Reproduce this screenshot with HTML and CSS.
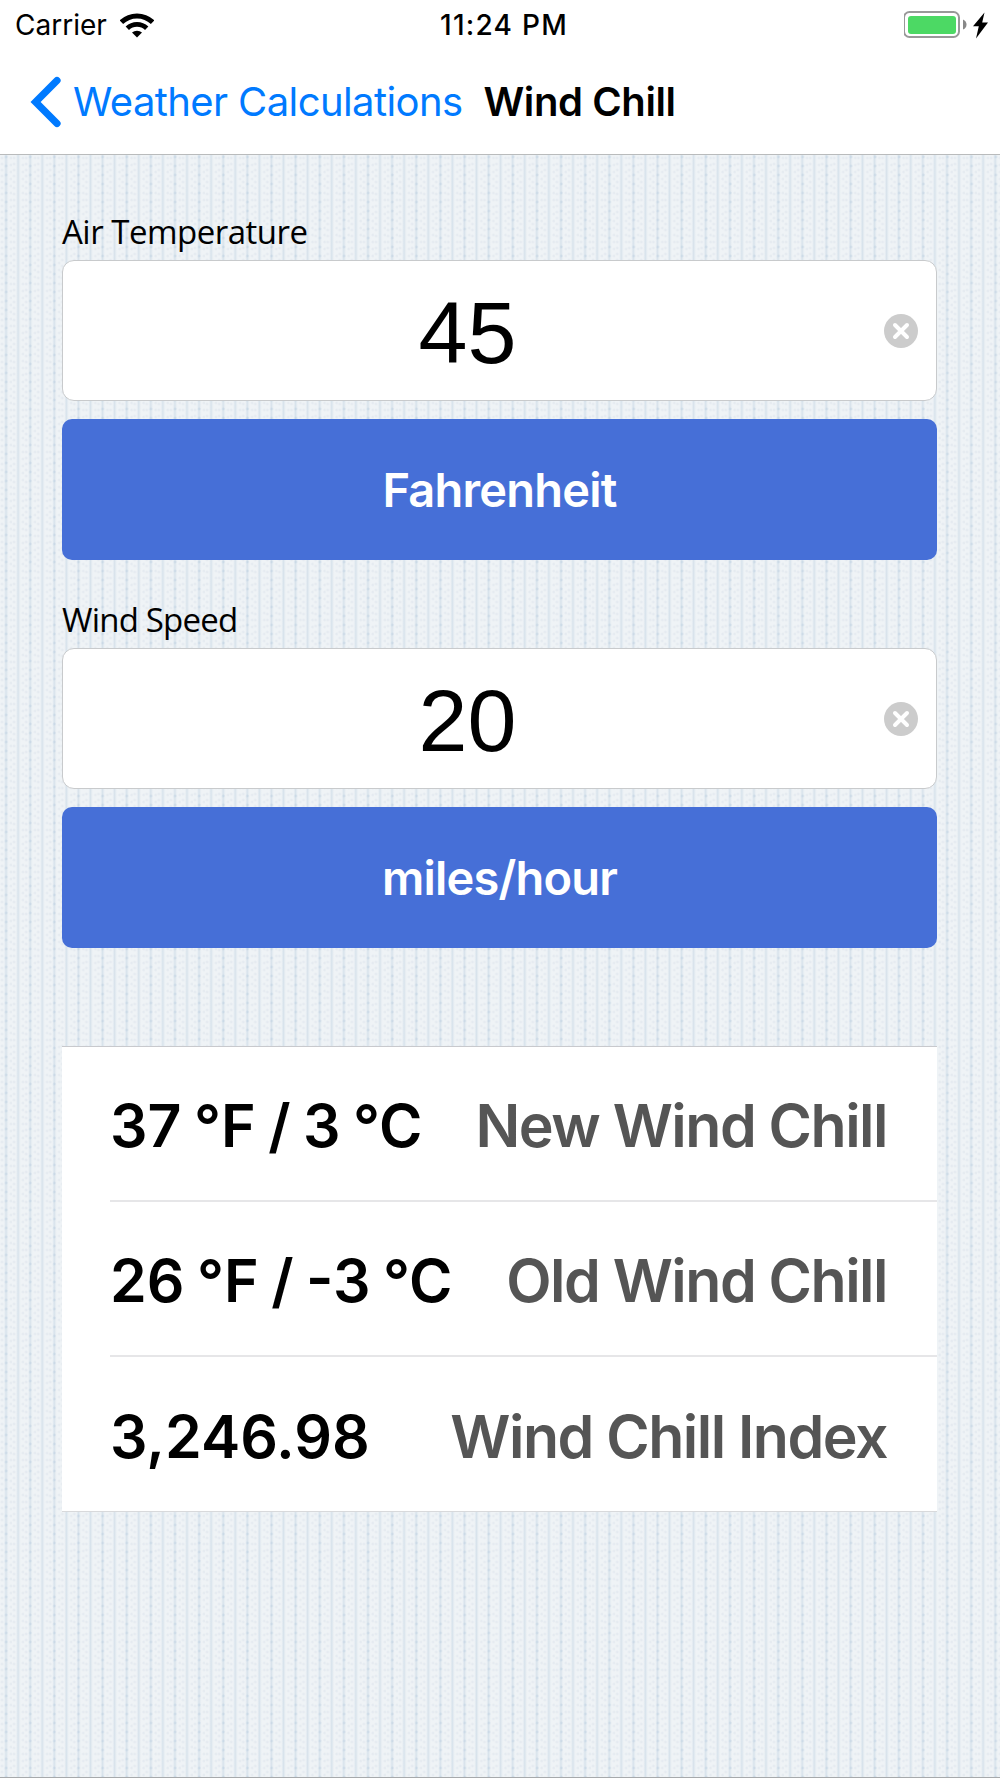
FILE: index.html
```html
<!DOCTYPE html>
<html lang="en">
<head>
    <meta charset="UTF-8">
    <meta name="viewport" content="width=device-width, initial-scale=1.0">
    <title>Wind Chill</title>
    <link rel="stylesheet" href="styles.css">
</head>
<body>
    <header class="header">
        <div class="status-bar">
            <div class="carrier">
                <span class="carrier-name">Carrier</span>
                <svg class="wifi" width="34" height="25" viewBox="0 0 34 25">
                    <path d="M1.4 9.2a22.5 22.5 0 0 1 31.2 0" fill="none" stroke="#000" stroke-width="5"/>
                    <path d="M7.3 15.3a14 14 0 0 1 19.4 0" fill="none" stroke="#000" stroke-width="4.8"/>
                    <path d="M12 19.6a7.4 7.4 0 0 1 10 0L17 24.6z"/>
                </svg>
            </div>
            <div class="time">11:24 PM</div>
            <div class="power">
                <svg width="86" height="28" viewBox="0 0 86 28">
                    <rect x="0" y="1" width="55" height="25" rx="5.5" fill="#fff" stroke="#999" stroke-width="2"/>
                    <rect x="4" y="5" width="48" height="18" rx="3" fill="#4cd964"/>
                    <path d="M59 8.5q3.5 1.5 3.5 5t-3.5 5z" fill="#888"/>
                    <path d="M80.5 1.5L69 15.2h5.8L72 27.5 84 11.5h-5.8z"/>
                </svg>
            </div>
        </div>
        <nav class="nav-bar">
            <a class="back" href="#">
                <svg width="31" height="52" viewBox="0 0 31 52">
                    <path d="M27 4.5L5.6 26 27 47.5" fill="none" stroke="#007aff" stroke-width="7.2" stroke-linecap="round" stroke-linejoin="miter"/>
                </svg>
                <span class="back-text">Weather Calculations</span>
            </a>
            <h1 class="title">Wind Chill</h1>
        </nav>
    </header>

    <main class="content">
        <section class="field">
            <div class="label label-temp">Air Temperature</div>
            <div class="input">
                <span class="value">45</span>
                <svg class="clear" width="34" height="34" viewBox="0 0 34 34">
                    <circle cx="17" cy="17" r="17" fill="#ccc"/>
                    <path d="M11 11l12 12M23 11L11 23" stroke="#fff" stroke-width="4" stroke-linecap="round"/>
                </svg>
            </div>
            <button class="unit">Fahrenheit</button>
        </section>

        <section class="field">
            <div class="label label-speed">Wind Speed</div>
            <div class="input">
                <span class="value">20</span>
                <svg class="clear" width="34" height="34" viewBox="0 0 34 34">
                    <circle cx="17" cy="17" r="17" fill="#ccc"/>
                    <path d="M11 11l12 12M23 11L11 23" stroke="#fff" stroke-width="4" stroke-linecap="round"/>
                </svg>
            </div>
            <button class="unit">miles/hour</button>
        </section>

        <section class="results">
            <div class="row">
                <span class="result">37 °F / 3 °C</span>
                <span class="name">New Wind Chill</span>
            </div>
            <div class="row">
                <span class="result">26 °F / -3 °C</span>
                <span class="name">Old Wind Chill</span>
            </div>
            <div class="row">
                <span class="result">3,246.98</span>
                <span class="name">Wind Chill Index</span>
            </div>
        </section>
    </main>
</body>
</html>
```
FILE: styles.css
```css
* {
    box-sizing: border-box;
}
body {
    margin: 0;
    min-height: 1778px;
    font-family: Inter, "Liberation Sans", sans-serif;
    color: #000;
    border-bottom: 1px solid #a6a9ab;
    background-color: #eff3f6;
    /* ribbed cloth: one rib every 12px, dots on the ribs and a faint weave between */
    background-image:
        radial-gradient(circle at 6.1px 4px, rgba(176, 198, 218, 0.5) 0, transparent 2px),
        linear-gradient(90deg, transparent 4px, rgba(196, 213, 227, 0.55) 6px, transparent 8.2px),
        radial-gradient(circle at 2px 2px, rgba(208, 217, 228, 0.45) 0, transparent 2px),
        radial-gradient(circle at 11px 4px, rgba(208, 217, 228, 0.45) 0, transparent 2px);
    background-size: 24.146px 9px, 12.073px 100%, 12.073px 6px, 12.073px 7px;
}
.header {
    height: 155px;
    background: #fff;
    border-bottom: 1px solid #b9bbbc;
}
.status-bar {
    display: grid;
    grid-template-columns: 1fr auto 1fr;
    align-items: center;
    height: 50px;
    padding: 0 10px 0 15px;
    font-size: 28px;
}
.carrier {
    display: flex;
    align-items: center;
    gap: 13px;
}
.time {
    padding-left: 3px;
    font-weight: 500;
    letter-spacing: 1.25px;
}
.power {
    display: flex;
    justify-content: flex-end;
}
.nav-bar {
    display: flex;
    align-items: center;
    height: 103px;
    padding: 0 30px;
    font-size: 40px;
}
.back {
    display: flex;
    align-items: center;
    gap: 12px;
    color: #007aff;
    text-decoration: none;
    letter-spacing: -0.6px;
}
.title {
    margin: 0 0 0 21px;
    font-size: 40px;
    font-weight: 600;
    letter-spacing: -0.4px;
}
.content {
    padding: 0 63px 0 62px;
}
.field {
    padding-top: 55px;
}
.field + .field {
    padding-top: 38px;
}
.label {
    height: 50px;
    line-height: 44px;
    font-family: "Open Sans", sans-serif;
    font-size: 33px;
}
.label-temp {
    letter-spacing: -0.5px;
}
.label-speed {
    letter-spacing: -0.8px;
}
.input {
    display: flex;
    align-items: center;
    height: 141px;
    padding: 0 18px;
    background: #fff;
    border: 1px solid #c8cacc;
    border-radius: 12px;
}
.value {
    flex: 1;
    padding: 4px 30px 0 0;
    text-align: center;
    font-family: "Liberation Sans", sans-serif;
    font-size: 88px;
}
.unit {
    display: block;
    width: 100%;
    height: 141px;
    margin-top: 18px;
    border: none;
    border-radius: 10px;
    background: #466fd7;
    color: #fff;
    font-family: inherit;
    font-size: 47px;
    font-weight: 600;
    letter-spacing: -0.8px;
}
.results {
    margin-top: 98px;
    background: #fff;
    border-top: 1px solid #c8c9cd;
    border-bottom: 1px solid #d8d9db;
}
.row {
    display: flex;
    justify-content: space-between;
    align-items: center;
    height: 155px;
    margin-left: 48px;
    padding: 4px 50px 0 0;
    border-bottom: 2px solid #e6e6e8;
    font-size: 59px;
    font-weight: 600;
}
.row:last-child {
    height: 154px;
    border-bottom: none;
}
.result {
    word-spacing: -2.4px;
}
.name {
    color: #555;
    letter-spacing: -1.5px;
}
```
